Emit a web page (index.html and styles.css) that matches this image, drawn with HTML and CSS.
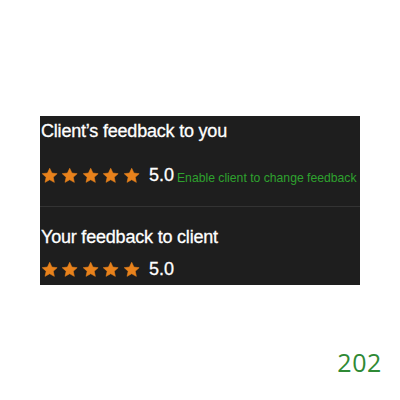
FILE: index.html
```html
<!DOCTYPE html>
<html lang="en">
<head>
    <meta charset="UTF-8">
    <title>Feedback</title>
    <link rel="stylesheet" href="styles.css">
</head>
<body>

    <!-- Feedback card -->
    <div class="card">
        <div class="section">
            <h2 class="title">Client’s feedback to you</h2>
            <div class="rating">
                <span class="stars">
                    <svg viewBox="0 0 24 24"><path d="M12 1.8l3.1 6.6 7.2.8-5.4 4.9 1.5 7.1L12 17.6l-6.4 3.6 1.5-7.1L1.7 9.2l7.2-.8z"/></svg>
                    <svg viewBox="0 0 24 24"><path d="M12 1.8l3.1 6.6 7.2.8-5.4 4.9 1.5 7.1L12 17.6l-6.4 3.6 1.5-7.1L1.7 9.2l7.2-.8z"/></svg>
                    <svg viewBox="0 0 24 24"><path d="M12 1.8l3.1 6.6 7.2.8-5.4 4.9 1.5 7.1L12 17.6l-6.4 3.6 1.5-7.1L1.7 9.2l7.2-.8z"/></svg>
                    <svg viewBox="0 0 24 24"><path d="M12 1.8l3.1 6.6 7.2.8-5.4 4.9 1.5 7.1L12 17.6l-6.4 3.6 1.5-7.1L1.7 9.2l7.2-.8z"/></svg>
                    <svg viewBox="0 0 24 24"><path d="M12 1.8l3.1 6.6 7.2.8-5.4 4.9 1.5 7.1L12 17.6l-6.4 3.6 1.5-7.1L1.7 9.2l7.2-.8z"/></svg>
                </span>
                <span class="score">5.0</span>
                <a class="enable-link">Enable client to change feedback</a>
            </div>
        </div>
        <div class="section second">
            <h2 class="title">Your feedback to client</h2>
            <div class="rating">
                <span class="stars">
                    <svg viewBox="0 0 24 24"><path d="M12 1.8l3.1 6.6 7.2.8-5.4 4.9 1.5 7.1L12 17.6l-6.4 3.6 1.5-7.1L1.7 9.2l7.2-.8z"/></svg>
                    <svg viewBox="0 0 24 24"><path d="M12 1.8l3.1 6.6 7.2.8-5.4 4.9 1.5 7.1L12 17.6l-6.4 3.6 1.5-7.1L1.7 9.2l7.2-.8z"/></svg>
                    <svg viewBox="0 0 24 24"><path d="M12 1.8l3.1 6.6 7.2.8-5.4 4.9 1.5 7.1L12 17.6l-6.4 3.6 1.5-7.1L1.7 9.2l7.2-.8z"/></svg>
                    <svg viewBox="0 0 24 24"><path d="M12 1.8l3.1 6.6 7.2.8-5.4 4.9 1.5 7.1L12 17.6l-6.4 3.6 1.5-7.1L1.7 9.2l7.2-.8z"/></svg>
                    <svg viewBox="0 0 24 24"><path d="M12 1.8l3.1 6.6 7.2.8-5.4 4.9 1.5 7.1L12 17.6l-6.4 3.6 1.5-7.1L1.7 9.2l7.2-.8z"/></svg>
                </span>
                <span class="score">5.0</span>
            </div>
        </div>
    </div>

    <div class="page-number">202</div>

</body>
</html>
```

FILE: styles.css
```css
/* General Styles */
body {
    margin: 0;
    background: #fff;
    font-family: 'Liberation Sans', Arial, sans-serif;
}

/* Card */
.card {
    margin: 116px 0 0 40px;
    width: 320px;
    height: 169px;
    background: #1e1e1e;
    color: #fff;
}

.section {
    padding: 4px 0 0 1px;
    height: 91px;
    box-sizing: border-box;
    border-bottom: 1px solid #333;
}

.section.second {
    border-bottom: none;
    padding-top: 19px;
    height: auto;
}

.title {
    margin: 0;
    font-size: 18px;
    font-weight: normal;
    letter-spacing: -0.2px;
    line-height: 22px;
    -webkit-text-stroke: 0.3px #fff;
}

.rating {
    display: flex;
    align-items: center;
    margin-top: 23px;
    white-space: nowrap;
}

.second .rating {
    margin-top: 11px;
}

.stars {
    display: flex;
    gap: 3px;
}

.stars svg {
    width: 17.4px;
    height: 17.4px;
    fill: #e8821c;
    stroke: #e8821c;
    stroke-width: 0.8;
    stroke-linejoin: round;
}

.score {
    margin-left: 9px;
    font-size: 18px;
    -webkit-text-stroke: 0.3px #fff;
}

.enable-link {
    margin: 4px 0 0 3px;
    font-size: 12.2px;
    color: #2ea22e;
}

/* Page footer */
.page-number {
    margin: 60px 18px 0 0;
    text-align: right;
    font-family: 'Open Sans', sans-serif;
    font-size: 25px;
    letter-spacing: 0.6px;
    color: #2f8a35;
}
```
